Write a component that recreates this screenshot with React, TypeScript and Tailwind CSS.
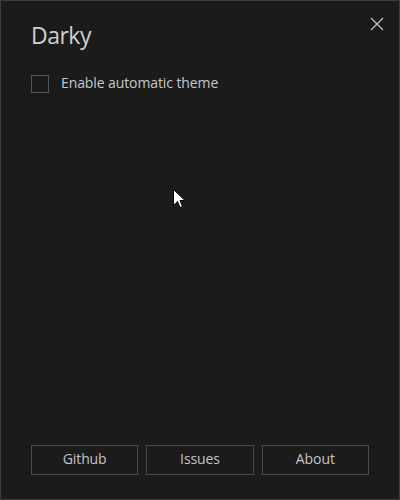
import React from "react";

export default function App() {
  return (
    <div
      className="relative w-[400px] h-[500px] bg-[#1b1b1b] border border-[#3d3d3d] flex flex-col px-[30px] pb-[24px] text-[#c8c8c8]"
      style={{ fontFamily: '"Open Sans", "Noto Sans", sans-serif' }}
    >
      <h1 className="mt-[18px] text-[23px] leading-[32px] text-[#d0d0d0] tracking-[-0.5px]">Darky</h1>
      <button className="absolute top-[16px] right-[15px] w-[14px] h-[14px] flex items-center justify-center">
        <svg width="14" height="14" viewBox="0 0 14 14">
          <path d="M1 1 L13 13 M13 1 L1 13" stroke="#c4c4c4" strokeWidth="1.2" fill="none" />
        </svg>
      </button>
      <label className="mt-[22px] flex items-center gap-[12px]">
        <span className="w-[18px] h-[18px] border border-[#555555] bg-[#1b1b1b]" />
        <span className="text-[14px] leading-[20px] pb-[2px] text-[#c8c8c8] tracking-[-0.1px]">Enable automatic theme</span>
      </label>
      <div className="flex-1" />
      <div className="grid grid-cols-3 gap-2">
        <button className="h-[30px] pb-[3px] border border-[#4a4a4a] text-[14px] text-[#c4c4c4] tracking-[-0.1px]">Github</button>
        <button className="h-[30px] pb-[3px] border border-[#4a4a4a] text-[14px] text-[#c4c4c4] tracking-[-0.1px]">Issues</button>
        <button className="h-[30px] pb-[3px] border border-[#4a4a4a] text-[14px] text-[#c4c4c4] tracking-[-0.1px]">About</button>
      </div>
      <svg className="absolute left-[172px] top-[188px]" width="13" height="20" viewBox="0 0 13 20">
        <path d="M0.5 0.5 L0.5 16.5 L4.5 12.5 L7 18.5 L9.5 17.5 L7 11.5 L12 11.5 Z" fill="#ffffff" stroke="#000000" strokeWidth="1" />
      </svg>
    </div>
  );
}
